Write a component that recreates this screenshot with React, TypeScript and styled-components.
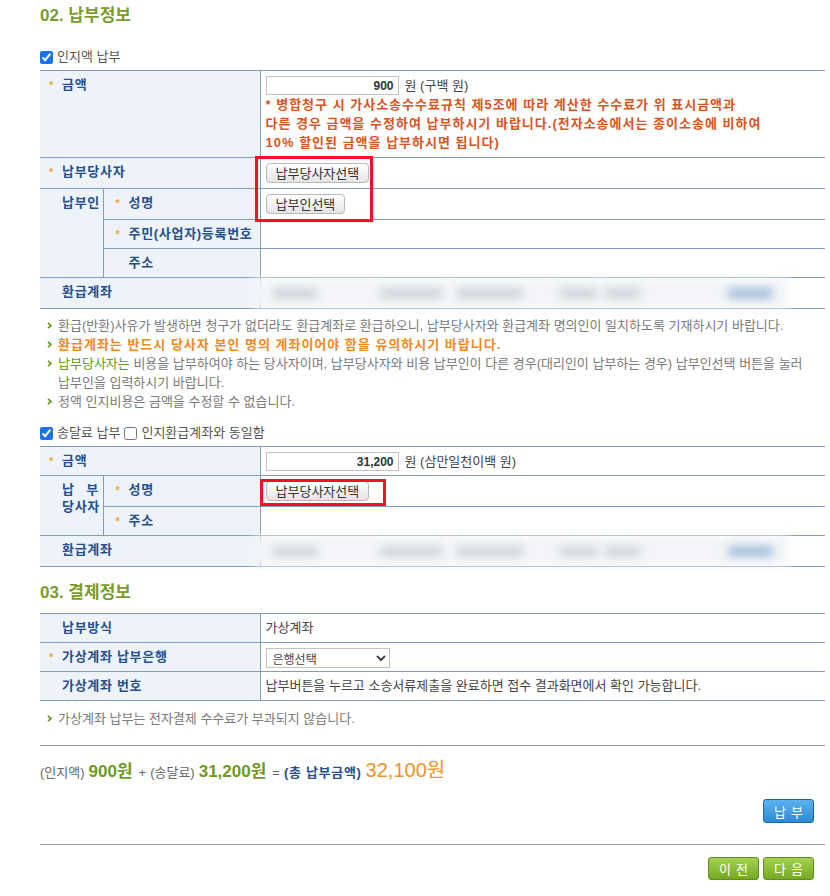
import React from "react";
import styled, { createGlobalStyle } from "styled-components";

const GlobalStyle = createGlobalStyle`
  body {
    margin: 0;
    background: #fff;
    font-family: "Liberation Sans", "Noto Sans CJK KR", sans-serif;
    font-size: 13px;
    color: #555;
  }
`;

const Page = styled.div`
  width: 785px;
  padding: 6px 0 0 40px;
`;

const SectionTitle = styled.h2<{ $top?: number }>`
  margin: ${(p) => p.$top ?? 0}px 0 0;
  font-size: 17px;
  line-height: 20px;
  font-weight: bold;
  color: #7b9c2c;
`;

const CheckRow = styled.div<{ $top: number }>`
  display: flex;
  align-items: center;
  gap: 4px;
  height: 16px;
  margin: ${(p) => p.$top}px 0 5px;
  color: #555;
  line-height: 16px;
`;

const Check = styled.input`
  width: 13px;
  height: 13px;
  margin: 0;
  accent-color: #1a73e8;
`;

const TableWrap = styled.table<{ $top?: number }>`
  width: 100%;
  margin-top: ${(p) => p.$top ?? 0}px;
  table-layout: fixed;
  border-collapse: collapse;
  border-top: 1px solid #7f9dc0;
`;

const Th = styled.th<{ $sub?: boolean; $group?: boolean }>`
  background: #eef3fa;
  border-bottom: 1px solid #7f9dc0;
  border-right: 1px solid #7f9dc0;
  padding: 5px 4px 5px ${(p) => (p.$group ? 22 : p.$sub ? 12 : 9)}px;
  text-align: left;
  vertical-align: top;
  color: #24508e;
  font-size: 13px;
  font-weight: bold;
  letter-spacing: 0.7px;
  line-height: 17px;
  white-space: nowrap;
`;

const Td = styled.td`
  position: relative;
  border-bottom: 1px solid #7f9dc0;
  padding: 5px 6px 5px 5px;
  vertical-align: top;
  color: #444;
  line-height: 17px;
`;

const Star = styled.span<{ $on: boolean }>`
  display: inline-block;
  width: 13px;
  color: #eea43a;
  font-size: 11px;
  visibility: ${(p) => (p.$on ? "visible" : "hidden")};
`;

const Spread = styled.span`
  display: flex;
  justify-content: space-between;
  width: 37px;
`;

const Inline = styled.div<{ $tight?: boolean }>`
  display: flex;
  align-items: center;
  gap: 6px;
  height: 19px;
  margin-bottom: ${(p) => (p.$tight ? -1 : 0)}px;
`;

const Amount = styled.input`
  box-sizing: border-box;
  width: 133px;
  height: 19px;
  border: 1px solid #c2c2c2;
  padding: 0 4px;
  text-align: right;
  font: bold 12px "Liberation Sans", "Noto Sans CJK KR", sans-serif;
  color: #333;
`;

const Warn = styled.div`
  color: #d9541e;
  font-weight: bold;
  letter-spacing: 1px;
  line-height: 19px;
`;

const PickButton = styled.button`
  display: block;
  height: 20px;
  padding: 0 9px;
  border: 1px solid #b8b8b8;
  border-radius: 4px;
  background: linear-gradient(#ffffff, #e4e4e4);
  font: 13px "Noto Sans CJK KR", sans-serif;
  color: #333;
  line-height: 18px;
`;

const Highlight = styled.div<{ $top: number; $left: number; $w: number; $h: number }>`
  position: absolute;
  top: ${(p) => p.$top}px;
  left: ${(p) => p.$left}px;
  width: ${(p) => p.$w}px;
  height: ${(p) => p.$h}px;
  box-sizing: border-box;
  border: 3px solid #ff0b24;
  pointer-events: none;
`;

const Blurred = styled.div`
  display: flex;
  align-items: center;
  width: 536px;
  height: 30px;
  margin: -5px 0 -5px -13px;
  background: #f3f5f8;
  filter: blur(4px);
`;

const Blob = styled.span<{ $w: number; $ml: number; $c?: string }>`
  flex: none;
  width: ${(p) => p.$w}px;
  height: 11px;
  margin-left: ${(p) => p.$ml}px;
  border-radius: 2px;
  background: ${(p) => p.$c ?? "#d2d6dc"};
`;

const Notes = styled.ul<{ $top: number }>`
  margin: ${(p) => p.$top}px 0 0;
  padding: 0;
  list-style: none;
`;

const Note = styled.li`
  display: flex;
  color: #7a7a7a;
  line-height: 19px;
  word-break: keep-all;
`;

const Bullet = styled.svg`
  flex: none;
  margin: 6px 6px 0 7px;
`;

const Strong = styled.span`
  color: #f0891e;
  font-weight: bold;
  letter-spacing: 1px;
`;

const Green = styled.span`
  color: #5f9a1c;
`;

const BankSelect = styled.select`
  display: block;
  width: 124px;
  height: 20px;
  margin-bottom: -2px;
  border: 1px solid #c2c2c2;
  background: #fff;
  font: 12px "Noto Sans CJK KR", sans-serif;
  color: #444;
  padding: 0 2px;
`;

const Summary = styled.div`
  margin-top: 17px;
  padding: 12px 0 21px;
  border-top: 1px solid #9a9a9a;
  border-bottom: 1px solid #9a9a9a;
`;

const Total = styled.div`
  display: flex;
  align-items: baseline;
  gap: 4px;
  height: 24px;
  line-height: 24px;
  color: #666;
`;

const Money = styled.span<{ $big?: boolean }>`
  font-size: ${(p) => (p.$big ? 20 : 17)}px;
  font-weight: ${(p) => (p.$big ? "normal" : "bold")};
  color: ${(p) => (p.$big ? "#f0932b" : "#6d9a1f")};
  margin-right: 2px;
`;

const TotalLabel = styled.span`
  color: #24508e;
  font-weight: bold;
  letter-spacing: 0.7px;
`;

const ButtonRow = styled.div<{ $top: number }>`
  display: flex;
  justify-content: flex-end;
  gap: 4px;
  margin-top: ${(p) => p.$top}px;
  padding-right: 11px;
`;

const ActionButton = styled.button<{ $tone: "blue" | "green" }>`
  width: 51px;
  height: ${(p) => (p.$tone === "blue" ? 24 : 23)}px;
  border: 1px solid ${(p) => (p.$tone === "blue" ? "#1f65a3" : "#5e8d1b")};
  border-radius: 3px;
  background: ${(p) =>
    p.$tone === "blue"
      ? "linear-gradient(#5cb2ef, #2f8bd6)"
      : "linear-gradient(#a4d24e, #74a923)"};
  color: #fff;
  font: 13px "Noto Sans CJK KR", sans-serif;
  letter-spacing: 5px;
  text-indent: 5px;
  padding: 0;
`;

const Cols = () => (
  <colgroup>
    <col style={{ width: 63 }} />
    <col style={{ width: 157 }} />
    <col />
  </colgroup>
);

const Label = ({ star, children }: { star?: boolean; children: React.ReactNode }) => (
  <>
    <Star $on={!!star}>*</Star>
    {children}
  </>
);

const BlurredAccount = () => (
  <Blurred>
    <Blob $ml={20} $w={44} />
    <Blob $ml={63} $w={62} />
    <Blob $ml={15} $w={66} />
    <Blob $ml={37} $w={37} />
    <Blob $ml={8} $w={35} />
    <Blob $ml={88} $w={45} $c="#a8c2dc" />
  </Blurred>
);

const Arrow = () => (
  <Bullet width="5" height="7" viewBox="0 0 5 7">
    <path d="M1 0.8 L4 3.5 L1 6.2" fill="none" stroke="#6a9d1e" strokeWidth="1.7" />
  </Bullet>
);

export default function App() {
  return (
    <Page>
      <GlobalStyle />
      <SectionTitle>02. 납부정보</SectionTitle>

      <CheckRow $top={23}>
        <Check type="checkbox" defaultChecked />
        인지액 납부
      </CheckRow>
      <TableWrap>
        <Cols />
        <tbody>
          <tr>
            <Th colSpan={2}>
              <Label star>금액</Label>
            </Th>
            <Td>
              <Inline>
                <Amount readOnly value="900" />
                원 (구백 원)
              </Inline>
              <Warn>
                * 병합청구 시 가사소송수수료규칙 제5조에 따라 계산한 수수료가 위 표시금액과
                <br />
                다른 경우 금액을 수정하여 납부하시기 바랍니다.(전자소송에서는 종이소송에 비하여
                <br />
                10% 할인된 금액을 납부하시면 됩니다)
              </Warn>
            </Td>
          </tr>
          <tr>
            <Th colSpan={2}>
              <Label star>납부당사자</Label>
            </Th>
            <Td>
              <PickButton>납부당사자선택</PickButton>
              <Highlight $top={-2} $left={-6} $w={118} $h={66} />
            </Td>
          </tr>
          <tr>
            <Th rowSpan={3} $group>
              납부인
            </Th>
            <Th $sub>
              <Label star>성명</Label>
            </Th>
            <Td>
              <PickButton>납부인선택</PickButton>
            </Td>
          </tr>
          <tr>
            <Th $sub>
              <Label star>주민(사업자)등록번호</Label>
            </Th>
            <Td />
          </tr>
          <tr>
            <Th $sub>
              <Label>주소</Label>
            </Th>
            <Td />
          </tr>
          <tr>
            <Th colSpan={2}>
              <Label>환급계좌</Label>
            </Th>
            <Td>
              <BlurredAccount />
            </Td>
          </tr>
        </tbody>
      </TableWrap>

      <Notes $top={7}>
        <Note>
          <Arrow />
          <span>
            환급(반환)사유가 발생하면 청구가 없더라도 환급계좌로 환급하오니, 납부당사자와 환급계좌 명의인이 일치하도록
            기재하시기 바랍니다.
          </span>
        </Note>
        <Note>
          <Arrow />
          <Strong>환급계좌는 반드시 당사자 본인 명의 계좌이어야 함을 유의하시기 바랍니다.</Strong>
        </Note>
        <Note>
          <Arrow />
          <span>
            <Green>납부당사자는</Green> 비용을 납부하여야 하는 당사자이며, 납부당사자와 비용 납부인이 다른
            경우(대리인이 납부하는 경우) 납부인선택 버튼을 눌러 납부인을 입력하시기 바랍니다.
          </span>
        </Note>
        <Note>
          <Arrow />
          <span>정액 인지비용은 금액을 수정할 수 없습니다.</span>
        </Note>
      </Notes>

      <CheckRow $top={14}>
        <Check type="checkbox" defaultChecked />
        송달료 납부
        <Check type="checkbox" />
        인지환급계좌와 동일함
      </CheckRow>
      <TableWrap>
        <Cols />
        <tbody>
          <tr>
            <Th colSpan={2}>
              <Label star>금액</Label>
            </Th>
            <Td>
              <Inline $tight>
                <Amount readOnly value="31,200" />
                원 (삼만일천이백 원)
              </Inline>
            </Td>
          </tr>
          <tr>
            <Th rowSpan={2} $group>
              <Spread>
                <span>납</span>
                <span>부</span>
              </Spread>
              당사자
            </Th>
            <Th $sub>
              <Label star>성명</Label>
            </Th>
            <Td>
              <PickButton>납부당사자선택</PickButton>
              <Highlight $top={3} $left={-1} $w={126} $h={27} />
            </Td>
          </tr>
          <tr>
            <Th $sub>
              <Label star>주소</Label>
            </Th>
            <Td />
          </tr>
          <tr>
            <Th colSpan={2}>
              <Label>환급계좌</Label>
            </Th>
            <Td>
              <BlurredAccount />
            </Td>
          </tr>
        </tbody>
      </TableWrap>

      <SectionTitle $top={16}>03. 결제정보</SectionTitle>
      <TableWrap $top={10}>
        <Cols />
        <tbody>
          <tr>
            <Th colSpan={2}>
              <Label>납부방식</Label>
            </Th>
            <Td>가상계좌</Td>
          </tr>
          <tr>
            <Th colSpan={2}>
              <Label star>가상계좌 납부은행</Label>
            </Th>
            <Td>
              <BankSelect defaultValue="">
                <option value="">은행선택</option>
              </BankSelect>
            </Td>
          </tr>
          <tr>
            <Th colSpan={2}>
              <Label>가상계좌 번호</Label>
            </Th>
            <Td>납부버튼을 누르고 소송서류제출을 완료하면 접수 결과화면에서 확인 가능합니다.</Td>
          </tr>
        </tbody>
      </TableWrap>
      <Notes $top={8}>
        <Note>
          <Arrow />
          <span>가상계좌 납부는 전자결제 수수료가 부과되지 않습니다.</span>
        </Note>
      </Notes>

      <Summary>
        <Total>
          <span>(인지액)</span>
          <Money>900원</Money>
          <span>+</span>
          <span>(송달료)</span>
          <Money>31,200원</Money>
          <span>=</span>
          <TotalLabel>(총 납부금액)</TotalLabel>
          <Money $big>32,100원</Money>
        </Total>
        <ButtonRow $top={17}>
          <ActionButton $tone="blue">납부</ActionButton>
        </ButtonRow>
      </Summary>

      <ButtonRow $top={12}>
        <ActionButton $tone="green">이전</ActionButton>
        <ActionButton $tone="green">다음</ActionButton>
      </ButtonRow>
    </Page>
  );
}
